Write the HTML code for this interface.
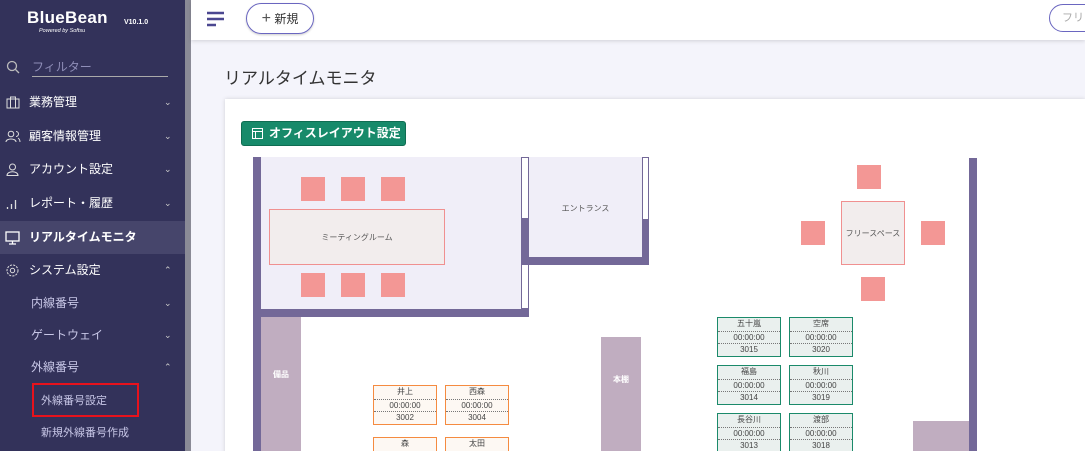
<!DOCTYPE html>
<html><head><meta charset="utf-8"><style>
*{margin:0;padding:0;box-sizing:border-box}
html,body{width:1085px;height:451px;overflow:hidden}
body{position:relative;background:#f4f4fb;font-family:"Liberation Sans","Noto Sans CJK JP",sans-serif}
#wrap{position:absolute;left:0;top:0;width:1085px;height:451px;overflow:hidden}
.a{position:absolute}
#sb{left:0;top:0;width:185px;height:451px;background:#33325a;color:#fff}
#scr{left:185px;top:0;width:6px;height:451px;background:#8a8a96}
.it{position:absolute;left:0;width:185px;font-size:12px;color:#fff;height:33px;line-height:33px}
.it .t{position:absolute;left:29px}
.it .c{position:absolute;left:164px;font-size:9px;color:#ccc}
.sub .t{left:31px;color:#c7c6e6}
.ch{background:#f39795;width:24px;height:24px;position:absolute}
.wall{background:#736898;position:absolute}
.lr{background:#f0eef8;position:absolute}
.tl{position:absolute;background:#f2eded;border:1px solid #f09090;font-size:8px;color:#555;display:flex;align-items:center;justify-content:center}
.sh{position:absolute;background:#c0adc0;color:#fff;font-size:8px;font-weight:bold;display:flex;align-items:center;justify-content:center}
.dk{position:absolute;width:64px;height:40px;font-size:8px;color:#444;text-align:center}
.dk div{height:12.6px;line-height:12px}
.dk div+div{border-top:1px dotted #777}
.o{border:1.5px solid #f58b40;background:#fdf8f3}
.g{border:1.5px solid #1b8a6a;background:#eaf0ee}
</style></head><body><div id="wrap">
<div id="sb" class="a">
 <div class="a" style="left:27px;top:8px;font-size:17px;font-weight:bold;letter-spacing:.3px">BlueBean</div>
 <div class="a" style="left:124px;top:19px;font-size:7px;font-weight:bold">V10.1.0</div>
 <div class="a" style="left:39px;top:28px;font-size:5.5px;font-style:italic">Powered by Softsu</div>
 <svg class="a" style="left:6px;top:60px" width="14" height="14" viewBox="0 0 14 14"><circle cx="6" cy="6" r="4.5" fill="none" stroke="#bbb" stroke-width="1.3"/><path d="M9.5 9.5L13 13" stroke="#bbb" stroke-width="1.3"/></svg>
 <div class="a" style="left:32px;top:58px;width:136px;height:19px;border-bottom:1px solid #aaa;font-size:12px;color:#8f8eb8">フィルター</div>
 <div class="it" style="top:86px"><svg class="a" style="left:6px;top:10px" width="14" height="13"><rect x="1" y="3" width="12" height="9" fill="none" stroke="#ddd"/><path d="M4.5 3V1h5v2M4.5 3v9M9.5 3v9" fill="none" stroke="#ddd"/></svg><span class="t">業務管理</span><span class="c">⌄</span></div>
 <div class="it" style="top:120px"><svg class="a" style="left:5px;top:10px" width="16" height="13"><circle cx="6" cy="4" r="2.8" fill="none" stroke="#ddd"/><path d="M1 12c0-4 10-4 10 0M11 1.5a2.5 2.5 0 010 5M13 8c1.5 1 2 2.5 2 4" fill="none" stroke="#ddd"/></svg><span class="t">顧客情報管理</span><span class="c">⌄</span></div>
 <div class="it" style="top:153px"><svg class="a" style="left:6px;top:10px" width="13" height="13"><circle cx="6.5" cy="4" r="3" fill="none" stroke="#ddd"/><path d="M1 12.5c0-5 11-5 11 0z" fill="none" stroke="#ddd"/></svg><span class="t">アカウント設定</span><span class="c">⌄</span></div>
 <div class="it" style="top:187px"><svg class="a" style="left:6px;top:11px" width="12" height="12"><path d="M1.5 11V9M5.5 11V6M9.5 11V2" stroke="#ddd" stroke-width="1.3"/></svg><span class="t">レポート・履歴</span><span class="c">⌄</span></div>
 <div class="it" style="top:221px;background:#46456b;font-weight:bold"><svg class="a" style="left:5px;top:10px" width="15" height="14"><rect x="1" y="1" width="13" height="9" fill="none" stroke="#fff" stroke-width="1.3"/><path d="M7.5 10v3M4 13h7" stroke="#fff" stroke-width="1.3"/></svg><span class="t">リアルタイムモニタ</span></div>
 <div class="it" style="top:254px"><svg class="a" style="left:5px;top:9px" width="15" height="15" viewBox="0 0 15 15"><circle cx="7.5" cy="7.5" r="2.2" fill="none" stroke="#ddd"/><circle cx="7.5" cy="7.5" r="5.5" fill="none" stroke="#ddd" stroke-dasharray="2.2 1.1"/></svg><span class="t">システム設定</span><span class="c">⌃</span></div>
 <div class="it sub" style="top:287px"><span class="t">内線番号</span><span class="c">⌄</span></div>
 <div class="it sub" style="top:319px"><span class="t">ゲートウェイ</span><span class="c">⌄</span></div>
 <div class="it sub" style="top:351px"><span class="t">外線番号</span><span class="c">⌃</span></div>
 <div class="a" style="left:32px;top:383px;width:107px;height:34px;border:2px solid #e8121c"></div>
 <div class="a" style="left:41px;top:392px;font-size:11px;color:#c7c6e6">外線番号設定</div>
 <div class="a" style="left:41px;top:424px;font-size:11px;color:#c7c6e6">新規外線番号作成</div>
</div>
<div id="scr" class="a"></div>
<div class="a" style="left:191px;top:0;width:894px;height:40px;background:#fff;box-shadow:0 1px 4px rgba(0,0,0,.15)"></div>
<svg class="a" style="left:207px;top:11px" width="20" height="16"><path d="M0 2h17M0 8h17M0 14h9" stroke="#4b4790" stroke-width="2.4"/></svg>
<div class="a" style="left:246px;top:3px;width:68px;height:31px;border:1px solid #6a66c0;border-radius:16px;font-size:12px;color:#333;line-height:29px;text-align:center;box-shadow:0 1px 2px rgba(0,0,0,.2)"><span style="font-size:16px;color:#555">+</span> 新規</div>
<div class="a" style="left:1049px;top:4px;width:60px;height:28px;border:1px solid #6a66c0;border-radius:14px;font-size:11px;color:#aaa;line-height:26px;padding-left:12px">フリー</div>
<div class="a" style="left:224px;top:64px;font-size:17px;color:#333">リアルタイムモニタ</div>
<div class="a" style="left:225px;top:99px;width:860px;height:360px;background:#fff;box-shadow:0 0 4px rgba(0,0,0,.15)"></div>
<div class="a" style="left:241px;top:121px;width:165px;height:25px;background:#178a6a;border-radius:3px;border:1px solid #0f6d52;color:#fff;font-size:12px;line-height:23px;padding-left:27px;font-weight:bold">オフィスレイアウト設定</div>
<svg class="a" style="left:252px;top:128px" width="11" height="11"><rect x=".5" y=".5" width="10" height="10" fill="none" stroke="#fff"/><path d="M.5 3.5h10M3.5 3.5v7" stroke="#fff"/></svg>
<div class="lr" style="left:261px;top:157px;width:260px;height:152px"></div>
<div class="wall" style="left:253px;top:157px;width:8px;height:294px"></div>
<div class="wall" style="left:253px;top:309px;width:276px;height:8px"></div>
<div class="a" style="left:521px;top:157px;width:8px;height:152px;border:1px solid #736898;background:#fff"></div>
<div class="wall" style="left:521px;top:218px;width:8px;height:45px"></div>
<div class="lr" style="left:529px;top:157px;width:113px;height:100px"></div>
<div class="wall" style="left:521px;top:257px;width:128px;height:8px"></div>
<div class="a" style="left:642px;top:157px;width:7px;height:100px;border:1px solid #736898;background:#fff"></div>
<div class="wall" style="left:642px;top:219px;width:7px;height:46px"></div>
<div class="a" style="left:529px;top:203px;width:113px;text-align:center;font-size:8px;color:#555">エントランス</div>
<div class="tl" style="left:269px;top:209px;width:176px;height:56px">ミーティングルーム</div>
<div class="ch" style="left:301px;top:177px"></div><div class="ch" style="left:341px;top:177px"></div><div class="ch" style="left:381px;top:177px"></div>
<div class="ch" style="left:301px;top:273px"></div><div class="ch" style="left:341px;top:273px"></div><div class="ch" style="left:381px;top:273px"></div>
<div class="sh" style="left:261px;top:317px;width:40px;height:134px;padding-bottom:20px">備品</div>
<div class="sh" style="left:601px;top:337px;width:40px;height:114px;padding-bottom:30px">本棚</div>
<div class="tl" style="left:841px;top:201px;width:64px;height:64px">フリースペース</div>
<div class="ch" style="left:857px;top:165px"></div><div class="ch" style="left:801px;top:221px"></div><div class="ch" style="left:921px;top:221px"></div><div class="ch" style="left:861px;top:277px"></div>
<div class="wall" style="left:969px;top:158px;width:8px;height:293px"></div>
<div class="sh" style="left:913px;top:421px;width:56px;height:30px"></div>
<div class="dk o" style="left:373px;top:385px"><div>井上</div><div>00:00:00</div><div>3002</div></div>
<div class="dk o" style="left:445px;top:385px"><div>西森</div><div>00:00:00</div><div>3004</div></div>
<div class="dk o" style="left:373px;top:437px"><div>森</div><div>00:00:00</div><div>3001</div></div>
<div class="dk o" style="left:445px;top:437px"><div>太田</div><div>00:00:00</div><div>3003</div></div>
<div class="dk g" style="left:717px;top:317px"><div>五十嵐</div><div>00:00:00</div><div>3015</div></div>
<div class="dk g" style="left:789px;top:317px"><div>空席</div><div>00:00:00</div><div>3020</div></div>
<div class="dk g" style="left:717px;top:365px"><div>福島</div><div>00:00:00</div><div>3014</div></div>
<div class="dk g" style="left:789px;top:365px"><div>秋川</div><div>00:00:00</div><div>3019</div></div>
<div class="dk g" style="left:717px;top:413px"><div>長谷川</div><div>00:00:00</div><div>3013</div></div>
<div class="dk g" style="left:789px;top:413px"><div>渡部</div><div>00:00:00</div><div>3018</div></div>
</div></body></html>
